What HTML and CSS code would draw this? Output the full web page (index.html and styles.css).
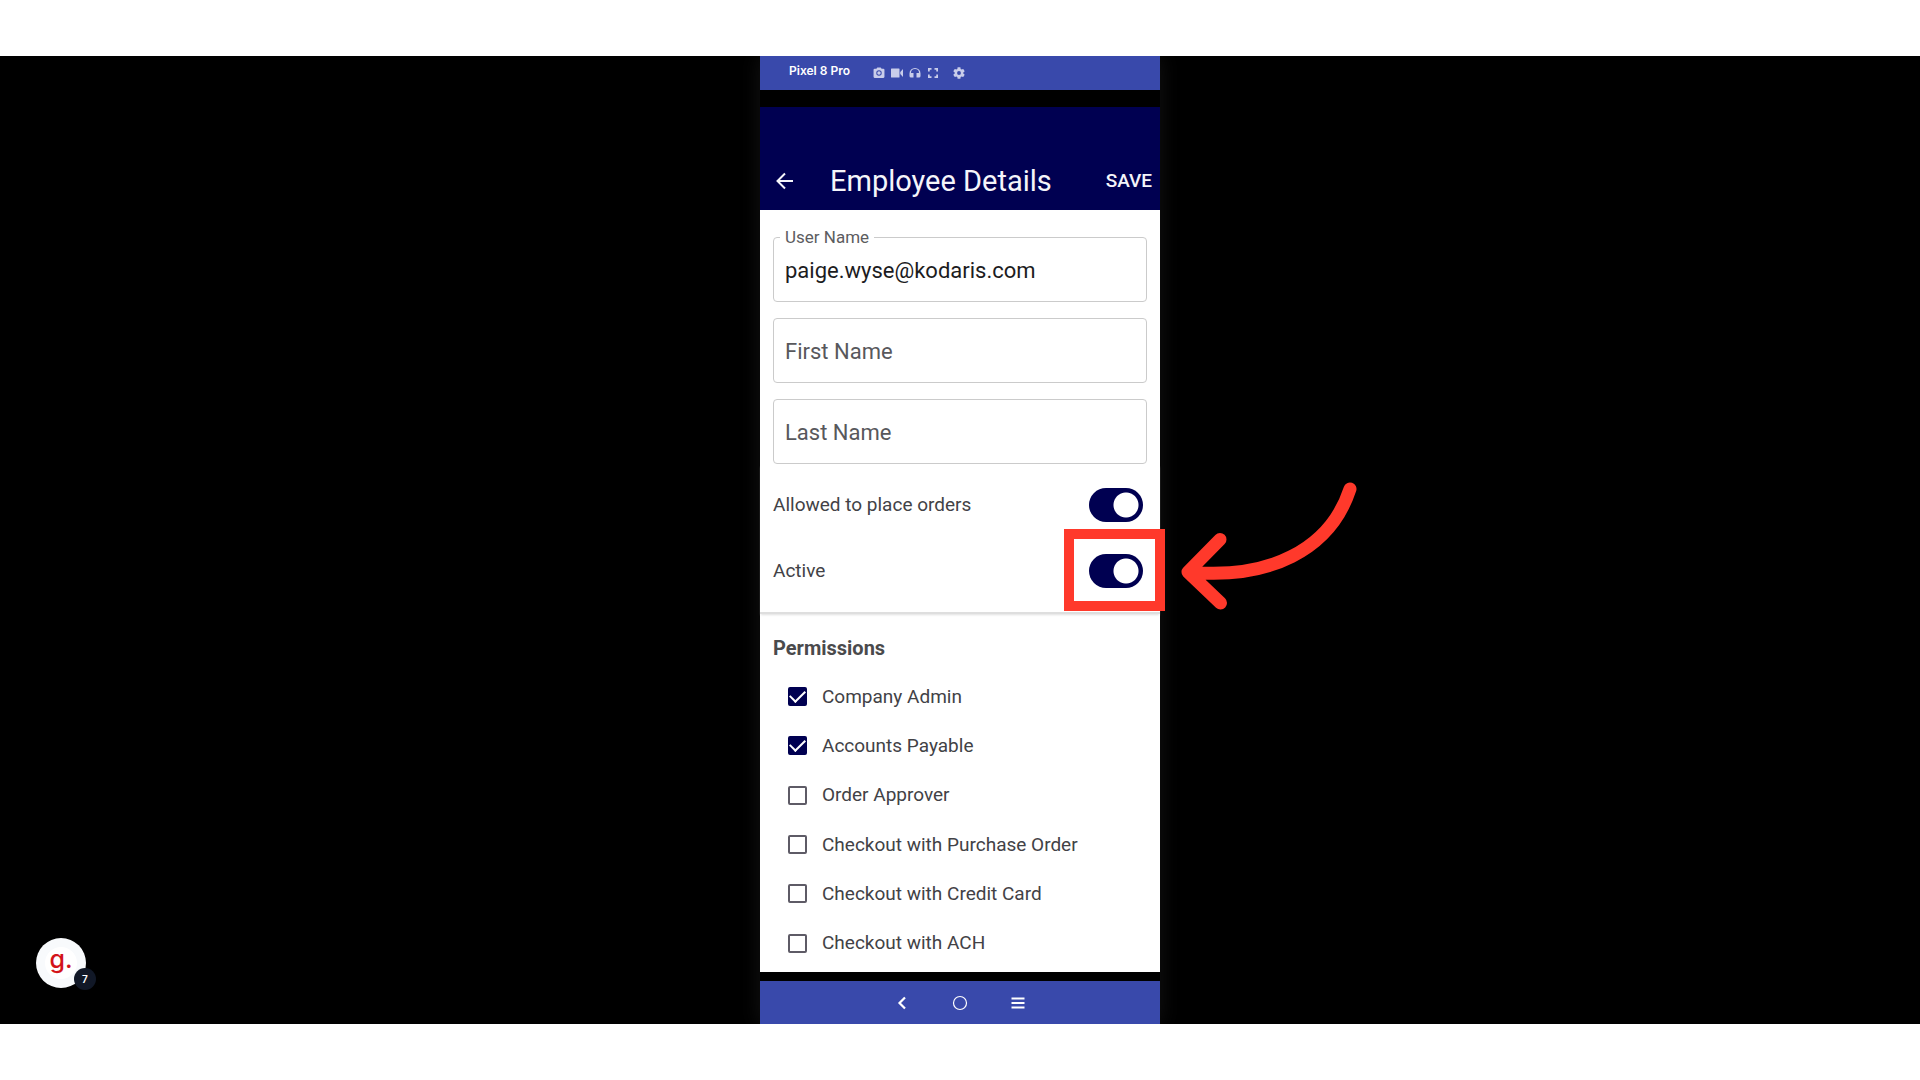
FILE: index.html
```html
<!DOCTYPE html>
<html lang="en">
<head>
<meta charset="utf-8">
<meta name="viewport" content="width=device-width, initial-scale=1">
<title>Employee Details</title>
<link rel="stylesheet" href="styles.css">
</head>
<body>
<main class="stage">
  <div class="phone">
    <header class="titlebar">
      <span class="device">Pixel 8 Pro</span>
      <div class="tools">
        <button type="button" class="tool" aria-label="Screenshot"><svg viewBox="1 1 22 22"><circle cx="12" cy="12" r="3.2"/><path d="M9 2 7.2 4H4a2 2 0 0 0-2 2v13a2 2 0 0 0 2 2h16a2 2 0 0 0 2-2V6a2 2 0 0 0-2-2h-3.200L15 2H9zm3 15a5 5 0 1 1 0-10 5 5 0 0 1 0 10z"/></svg></button>
        <button type="button" class="tool" aria-label="Record"><svg viewBox="0 0 24 24"><path d="M1 3h15a1 1 0 0 1 1 1v16a1 1 0 0 1-1 1H1a1 1 0 0 1-1-1V4a1 1 0 0 1 1-1zM18.500 10 24 4v16l-5.500-6z"/></svg></button>
        <button type="button" class="tool" aria-label="Audio"><svg viewBox="0 0 24 24"><path d="M12 2A11 11 0 0 0 1 13v5a3 3 0 0 0 3 3h5v-9H4a8 8 0 0 1 16 0h-5v9h5a3 3 0 0 0 3-3v-5A11 11 0 0 0 12 2z"/></svg></button>
        <button type="button" class="tool" aria-label="Full screen"><svg viewBox="0 0 24 24"><path d="M2 2h7v3.500H5.500V9H2zM15 2h7v7h-3.500V5.500H15zM2 15h3.500v3.500H9V22H2zM18.500 15H22v7h-7v-3.500h3.500z"/></svg></button>
        <button type="button" class="tool tool-settings" aria-label="Settings"><svg viewBox="2 2 20 20"><path d="M19.140 12.940c.04-.3.06-.61.06-.94 0-.32-.02-.64-.07-.94l2.030-1.580c.18-.14.23-.41.12-.61l-1.920-3.320c-.12-.22-.37-.29-.59-.22l-2.390.96c-.5-.38-1.030-.7-1.620-.94l-.36-2.540c-.04-.24-.24-.41-.48-.41h-3.840c-.24 0-.43.17-.47.41l-.36 2.540c-.59.24-1.130.57-1.620.94l-2.390-.96c-.22-.08-.47 0-.59.22L2.740 8.870c-.12.21-.08.47.12.61l2.030 1.580c-.05.3-.09.63-.09.94s.02.64.07.94l-2.030 1.580c-.18.14-.23.41-.12.61l1.920 3.320c.12.22.37.29.59.22l2.390-.96c.5.38 1.030.7 1.620.94l.36 2.540c.05.24.24.41.48.41h3.840c.24 0 .44-.17.47-.41l.36-2.540c.59-.24 1.130-.56 1.620-.94l2.390.96c.22.08.47 0 .59-.22l1.920-3.320c.12-.22.07-.47-.12-.61l-2.010-1.580zM12 15.200A3.200 3.200 0 1 1 12 8.800a3.200 3.200 0 0 1 0 6.400z"/></svg></button>
      </div>
    </header>

    <form class="screen">
      <div class="appbar">
        <button type="button" class="back" aria-label="Back"><svg viewBox="0 0 18 18"><path d="M17 9H2M9 1.500 1.500 9 9 16.500"/></svg></button>
        <h1 class="title">Employee Details</h1>
        <button type="button" class="save">SAVE</button>
      </div>

      <div class="fields">
        <div class="field">
          <label class="field-label" for="user">User Name</label>
          <input class="field-input" id="user" type="text" value="paige.wyse@kodaris.com">
        </div>
        <div class="field">
          <input class="field-input" type="text" aria-label="First Name" placeholder="First Name">
        </div>
        <div class="field">
          <input class="field-input" type="text" aria-label="Last Name" placeholder="Last Name">
        </div>
      </div>

      <div class="toggles">
        <div class="toggle-row">
          <label for="orders">Allowed to place orders</label>
          <input class="switch" id="orders" type="checkbox" role="switch" checked>
        </div>
        <div class="toggle-row">
          <label for="active">Active</label>
          <span class="marked">
            <input class="switch" id="active" type="checkbox" role="switch" checked>
            <svg class="arrow" viewBox="0 0 176 128" aria-hidden="true"><path d="M169 7C149 68 88 98 7 90M39 57.500 7 90l32.500 31"/></svg>
          </span>
        </div>
      </div>

      <section class="permissions">
        <h2 class="section-title">Permissions</h2>
        <div class="options">
          <label class="option"><input class="box" type="checkbox" checked>Company Admin</label>
          <label class="option"><input class="box" type="checkbox" checked>Accounts Payable</label>
          <label class="option"><input class="box" type="checkbox">Order Approver</label>
          <label class="option"><input class="box" type="checkbox">Checkout with Purchase Order</label>
          <label class="option"><input class="box" type="checkbox">Checkout with Credit Card</label>
          <label class="option"><input class="box" type="checkbox">Checkout with ACH</label>
        </div>
      </section>
    </form>

    <nav class="navbar">
      <button type="button" class="nav" aria-label="Back"><svg viewBox="0 0 16 16"><path d="M11 2.500 5.500 8l5.500 5.500" stroke-width="2.200"/></svg></button>
      <button type="button" class="nav" aria-label="Home"><svg viewBox="0 0 16 16"><circle cx="8" cy="8" r="6.500" stroke-width="1.200"/></svg></button>
      <button type="button" class="nav" aria-label="Recent apps"><svg viewBox="0 0 16 16"><path d="M1.500 3.500h13M1.500 8h13M1.500 12.500h13" stroke-width="1.900"/></svg></button>
    </nav>
  </div>

  <button type="button" class="guide" aria-label="Guide, 7 items">
    <span class="guide-logo">g.</span>
    <span class="guide-count">7</span>
  </button>
</main>
</body>
</html>
```
FILE: styles.css
```css
* {
  box-sizing: border-box;
}

body {
  margin: 0;
  min-height: 100vh;
  display: flex;
  flex-direction: column;
  justify-content: center;
  background: #fff;
  color: #424246;
  font-family: Roboto, "Liberation Sans", sans-serif;
}

button {
  padding: 0;
  border: 0;
  background: none;
  color: inherit;
  font: inherit;
  cursor: pointer;
}

button svg {
  display: block;
  width: 100%;
  height: 100%;
}

.stage {
  position: relative;
  display: flex;
  justify-content: center;
  overflow: hidden;
  background: #000;
}

.phone {
  width: 100%;
  max-width: 400px;
  background: #000;
  box-shadow: 0 0 20px #141414;
}

/* Emulator title bar */
.titlebar {
  display: flex;
  align-items: center;
  gap: 23px;
  height: 34px;
  padding-left: 29px;
  background: #3949ab;
  color: #fff;
}

.device {
  padding-bottom: 4px;
  font: 600 12px/16px Inter, "Liberation Sans", sans-serif;
}

.tools {
  display: flex;
  gap: 6px;
}

.tool {
  width: 12px;
  height: 12px;
  fill: #c9cdea;
}

.tool-settings {
  margin-left: 8px;
}

/* App screen */
.screen {
  margin: 17px 0 9px;
  background: #fff;
}

.appbar {
  display: flex;
  align-items: center;
  height: 103px;
  padding: 46px 8px 1px 16px;
  background: #000051;
  color: #f5f5fa;
}

.back {
  width: 18px;
  height: 18px;
}

.back path {
  fill: none;
  stroke: currentColor;
  stroke-width: 2;
}

.title {
  flex: 1;
  margin: 0 0 0 36px;
  font-size: 29px;
  font-weight: 400;
  line-height: 40px;
}

.save {
  font-size: 19px;
  font-weight: 500;
  line-height: 24px;
}

.fields {
  display: grid;
  gap: 16px;
  padding: 27px 13px 0;
}

.field {
  position: relative;
}

.field-label {
  position: absolute;
  top: -10px;
  left: 7px;
  padding: 0 5px;
  background: #fff;
  color: #5c5c60;
  font-size: 17px;
  line-height: 20px;
}

.field-input {
  display: block;
  width: 100%;
  height: 65px;
  padding: 1px 11px 0;
  border: 1px solid #cbcbcb;
  border-radius: 4px;
  background: #fff;
  color: #1c1c1e;
  font: 400 22px/32px Roboto, "Liberation Sans", sans-serif;
}

.field-input::placeholder {
  color: #58585c;
  opacity: 1;
}

.toggles {
  padding: 8px 17px 8px 13px;
  border-bottom: 2px solid #dedede;
  box-shadow: 0 2px 2px -1px #e0e0e0;
}

.toggle-row {
  display: flex;
  align-items: center;
  justify-content: space-between;
  height: 66px;
  font-size: 19px;
  line-height: 24px;
}

.switch {
  display: block;
  appearance: none;
  width: 54px;
  height: 34px;
  margin: 0;
  border-radius: 17px;
  background: radial-gradient(circle at 37px 17px, #fff 12px, #000051 13px);
}

/* Callout around the Active switch */
.marked {
  position: relative;
}

.marked::after {
  content: "";
  position: absolute;
  inset: -25px -22px -23px -25px;
  border: 10px solid #ff392b;
  pointer-events: none;
}

.arrow {
  position: absolute;
  left: 92px;
  top: -72px;
  width: 176px;
  height: 128px;
  fill: none;
  stroke: #ff392b;
  stroke-width: 13;
  stroke-linecap: round;
  stroke-linejoin: round;
}

.permissions {
  padding: 22px 13px 4px;
}

.section-title {
  margin: 0 0 12px;
  color: #4a4a4c;
  font-size: 20px;
  font-weight: 700;
  line-height: 24px;
}

.options {
  display: grid;
  grid-auto-rows: 1fr;
  min-height: 296px;
  padding-left: 15px;
}

.option {
  display: flex;
  align-items: center;
  gap: 15px;
  font-size: 19px;
  line-height: 24px;
}

.box {
  appearance: none;
  width: 19px;
  height: 19px;
  margin: 0;
  border: 2px solid #5e5b66;
  border-radius: 2px;
}

.box:checked {
  display: grid;
  place-items: center;
  border-color: #000051;
  background: #000051;
}

.box:checked::before {
  content: "";
  width: 13px;
  height: 7px;
  margin-bottom: 4px;
  border: solid #fff;
  border-width: 0 0 2px 2px;
  transform: rotate(-45deg);
}

/* Android navigation */
.navbar {
  display: flex;
  align-items: center;
  justify-content: center;
  gap: 42px;
  height: 43px;
  background: #3949ab;
}

.nav {
  width: 16px;
  height: 16px;
  fill: none;
  stroke: #fff;
}

/* Floating guide launcher */
.guide {
  position: absolute;
  left: 36px;
  bottom: 36px;
  display: grid;
  place-items: center;
  width: 50px;
  height: 50px;
  border-radius: 50%;
  background: #f8fafc;
}

.guide-logo {
  width: 32px;
  height: 32px;
  border-radius: 50%;
  background: #fff;
  color: #d3141a;
  font: 500 25px/24px Inter, "Liberation Sans", sans-serif;
  text-align: center;
}

.guide-count {
  position: absolute;
  right: -10px;
  bottom: -2px;
  width: 22px;
  height: 22px;
  border-radius: 50%;
  background: #111827;
  color: #fff;
  font: 600 10px/22px Inter, "Liberation Sans", sans-serif;
  text-align: center;
}
```
